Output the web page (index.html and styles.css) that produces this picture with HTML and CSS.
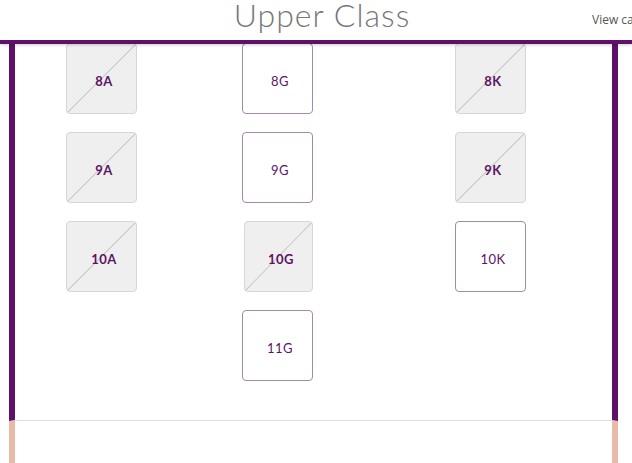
FILE: index.html
```html
<!DOCTYPE html>
<html lang="en">
<head>
  <meta charset="UTF-8">
  <title>Upper Class Seat Map</title>
  <link rel="stylesheet" href="styles.css">
</head>
<body>
  <div class="header">
    <h2>Upper Class</h2>
    <a class="view-link" href="#">View cabin</a>
  </div>

  <div class="cabin">
    <div class="seats">
      <div class="seat taken col-a">8A</div>
      <div class="seat col-g">8G</div>
      <div class="seat taken col-k">8K</div>

      <div class="seat taken col-a">9A</div>
      <div class="seat col-g">9G</div>
      <div class="seat taken col-k">9K</div>

      <div class="seat taken col-a">10A</div>
      <div class="seat taken col-g">10G</div>
      <div class="seat col-k">10K</div>

      <div class="seat col-g">11G</div>
    </div>
  </div>

  <div class="cabin-next"></div>
</body>
</html>
```

FILE: styles.css
```css
body {
  margin: 0;
  background-color: white;
  font-family: Lato, "Open Sans", sans-serif;
  overflow: hidden;
  height: 463px;
}

.header {
  position: relative;
  height: 40px;
  border-bottom: 4px solid #5e1167;
  box-shadow: 0 1px 3px rgba(0, 0, 0, 0.2);
  text-align: center;
  z-index: 2;
}

.header h2 {
  margin: 0;
  font-size: 32px;
  font-weight: 300;
  color: #777;
  line-height: 30px;
  letter-spacing: 1px;
  padding-left: 12px;
}

.view-link {
  position: absolute;
  left: 592px;
  top: 11px;
  font-family: "Open Sans", sans-serif;
  font-size: 12px;
  color: #555;
  text-decoration: none;
  white-space: nowrap;
}

.cabin {
  margin: 0 14px 0 9px;
  height: 376px;
  border-left: 6px solid #5e1167;
  border-right: 6px solid #5e1167;
  border-bottom: 1px solid #dedede;
  overflow: hidden;
}

.seats {
  display: grid;
  grid-template-columns: 71px 105px 71px 142px 71px;
  grid-auto-rows: 71px;
  row-gap: 18px;
  padding-left: 51px;
  margin-top: -1px;
}

.seat {
  box-sizing: border-box;
  border: 1px solid #a48aa8;
  border-radius: 4px;
  background: white;
  color: #5b1464;
  font-size: 13px;
  letter-spacing: 0.5px;
  padding: 4px 0 0 5px;
  display: flex;
  align-items: center;
  justify-content: center;
}

.seat.taken {
  border-color: #d6d6d6;
  font-weight: bold;
  background: linear-gradient(to bottom right, #efefef calc(50% - 1px), #c9c9c9 50%, #efefef calc(50% + 1px));
}

.col-a {
  grid-column: 1;
}

.col-g {
  grid-column: 3;
}

.col-k {
  grid-column: 5;
}

.col-g.taken {
  margin-left: 2px;
}

.cabin-next {
  margin: 0 14px 0 9px;
  height: 60px;
  border-left: 6px solid #e8baa7;
  border-right: 6px solid #e8baa7;
}
```
